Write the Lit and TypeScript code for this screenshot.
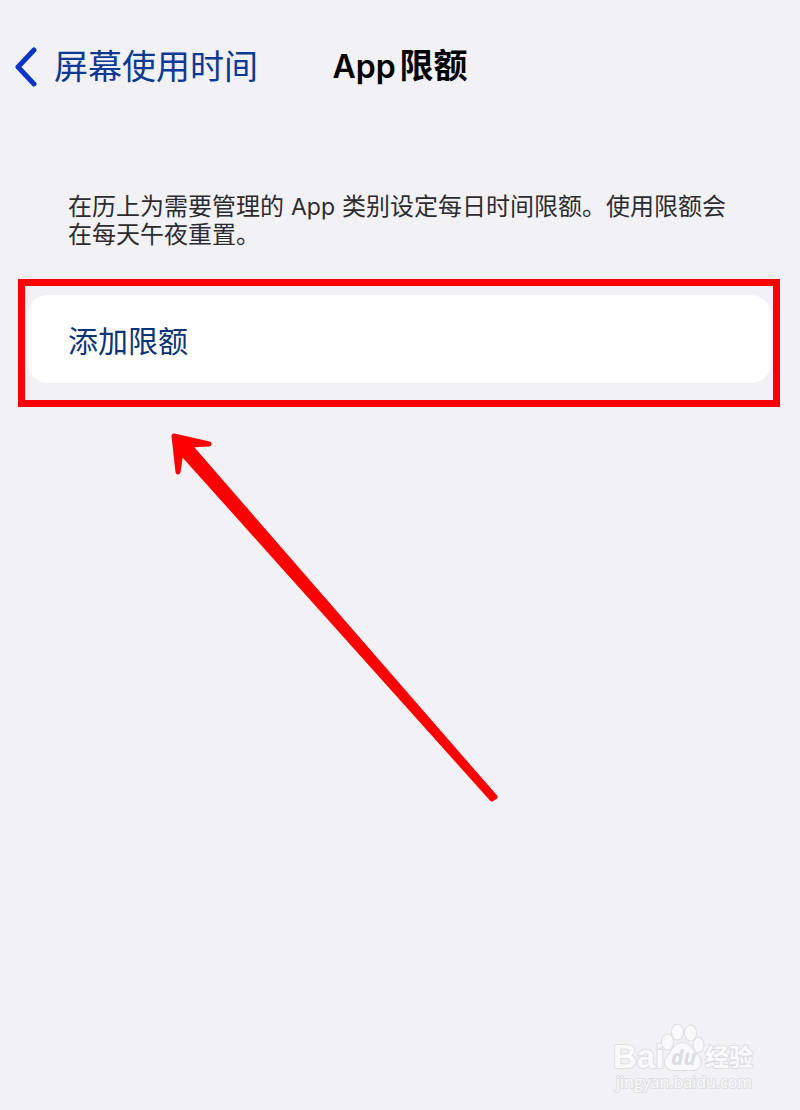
import { LitElement, html, css } from "lit";
import { customElement } from "lit/decorators.js";

@customElement("app-root")
export class AppRoot extends LitElement {
  static styles = css`
    :host {
      display: flex;
      flex-direction: column;
      box-sizing: border-box;
      min-height: 100vh;
      background: #f2f1f6;
      color: #2c2c30;
      font-family: Inter, "Noto Sans CJK SC", sans-serif;
    }
    .bar {
      display: grid;
      grid-template-columns: 1fr auto 1fr;
      align-items: center;
      height: 133px;
      padding: 0 14px;
    }
    .back {
      display: flex;
      align-items: center;
      gap: 16px;
      color: #0a3a94;
      font-size: 34px;
      line-height: 40px;
      text-decoration: none;
      white-space: nowrap;
    }
    .chevron {
      flex: none;
      fill: none;
      stroke: #0a35c4;
      stroke-width: 5;
      stroke-linecap: round;
      stroke-linejoin: round;
    }
    .title {
      display: flex;
      align-items: baseline;
      gap: 4px;
      margin: 0;
      color: #000;
      font-size: 34px;
      line-height: 40px;
      font-weight: 600;
    }
    .title-latin {
      font-size: 32px;
    }
    .note {
      margin: 60px 68px 30px;
      font-size: 24px;
      line-height: 28px;
    }
    .latin {
      margin: 0 7px;
      font-size: 23px;
    }
    .frame {
      margin: 0 20px 0 18px;
      padding: 9px 2px 17px 3px;
      border: 7px solid #f00;
    }
    .add {
      display: block;
      width: 100%;
      height: 88px;
      padding: 0 40px;
      border: 0;
      border-radius: 20px;
      background: #fff;
      color: #0a3478;
      font: inherit;
      font-size: 30px;
      text-align: left;
      cursor: pointer;
    }
    .arrow {
      margin: 23px 0 0 168px;
      fill: #f00;
      stroke: #f00;
      stroke-width: 5;
      stroke-linejoin: round;
    }
    .footer {
      display: flex;
      justify-content: flex-end;
      margin-top: auto;
      padding: 0 40px 14px;
    }
    .mark {
      fill: #fafafc;
      stroke: #dedee3;
      stroke-width: 2;
      paint-order: stroke;
    }
    .brand {
      font: 700 33px "Liberation Sans", sans-serif;
    }
    .paw-text {
      font: italic 700 21px "Open Sans", sans-serif;
      fill: #dcdce1;
      stroke: none;
    }
    .brand-cjk {
      font: 700 24px "Noto Sans CJK SC", sans-serif;
    }
    .site {
      font: 400 16px "Open Sans", sans-serif;
    }
  `;

  render() {
    return html`
      <header class="bar">
        <a class="back" href="#">
          <svg class="chevron" width="24" height="40" viewBox="0 0 24 40" aria-hidden="true">
            <path d="M20 3 4 20 20 37" />
          </svg>
          <span>屏幕使用时间</span>
        </a>
        <h1 class="title"><span class="title-latin">App</span><span>限额</span></h1>
      </header>
      <main>
        <p class="note">在历上为需要管理的<span class="latin">App</span>类别设定每日时间限额。使用限额会在每天午夜重置。</p>
        <section class="frame">
          <button class="add" type="button">添加限额</button>
        </section>
        <svg class="arrow" width="336" height="376" viewBox="168 430 336 376" aria-hidden="true">
          <path d="M174 436 209 444 189 445 495 797 492 799 181 452 178 472Z" />
        </svg>
      </main>
      <footer class="footer">
        <svg class="mark" width="148" height="74" viewBox="612 1022 148 74" role="img" aria-label="Baidu">
          <text class="brand" x="613" y="1068">Bai</text>
          <ellipse cx="667.500" cy="1042" rx="5.500" ry="7.500" />
          <ellipse cx="677.500" cy="1032" rx="5.500" ry="7.500" />
          <ellipse cx="690.500" cy="1033" rx="5.500" ry="7.500" />
          <ellipse cx="698.500" cy="1045" rx="5" ry="7" />
          <path d="M682 1043C674 1043 672 1052 667 1057C662 1063 666 1070 674 1070C679 1070 687 1070 692 1070C701 1070 703 1061 698 1056C693 1051 691 1043 682 1043Z" />
          <text class="paw-text" x="671" y="1065">du</text>
          <text class="brand-cjk" x="705" y="1066">经验</text>
          <text class="site" x="616" y="1088">jingyan.baidu.com</text>
        </svg>
      </footer>
    `;
  }
}
